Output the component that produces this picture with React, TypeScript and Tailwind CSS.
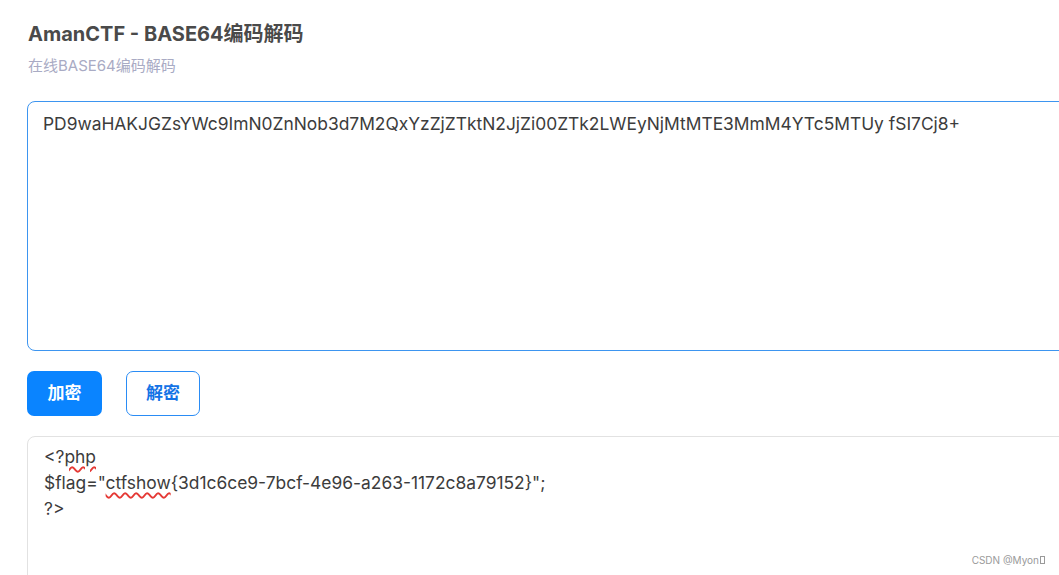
const input =
  "PD9waHAKJGZsYWc9ImN0ZnNob3d7M2QxYzZjZTktN2JjZi00ZTk2LWEyNjMtMTE3MmM4YTc5MTUy fSI7Cj8+";

function Squiggle({ children }: { children: React.ReactNode }) {
  return (
    <span className="underline decoration-wavy decoration-[#e53935] decoration-[1.5px] underline-offset-[3px]">
      {children}
    </span>
  );
}

export default function App() {
  return (
    <div className="relative h-[575px] w-[1059px] overflow-hidden bg-white font-['Inter','Noto_Sans_CJK_SC',sans-serif]">
      <div className="pl-[27px] pt-[20px]">
        <h1 className="pl-[1px] text-[20px] leading-[28px] font-bold text-[#4a4a4a]">
          AmanCTF - BASE64编码解码
        </h1>
        <p className="mt-[8px] pl-[1px] text-[15px] leading-[20px] text-[#a9abc4]">
          在线BASE64编码解码
        </p>

        {/* input */}
        <div className="mt-[25px] h-[250px] w-[1100px] rounded-[8px] border border-[#3d95f0] px-[15px] pt-[9px] text-[17.4px] leading-[26px] text-[#3c3c3c]">
          {input}
        </div>

        {/* buttons */}
        <div className="mt-[20px] flex gap-[24px]">
          <button className="h-[45px] w-[75px] rounded-[7px] bg-[#0a84ff] text-[17px] font-bold text-white">
            加密
          </button>
          <button className="h-[45px] w-[74px] rounded-[7px] border border-[#2a8cf5] bg-white text-[17px] font-bold text-[#1473e6]">
            解密
          </button>
        </div>

        {/* output */}
        <div className="mt-[20px] h-[200px] w-[1100px] rounded-[8px] border border-[#e2e2e2] px-[16px] pt-[7px] text-[17.4px] leading-[26px] text-[#3c3c3c]">
          <div>
            &lt;?<Squiggle>php</Squiggle>
          </div>
          <div>
            $flag="<Squiggle>ctfshow</Squiggle>
            {"{3d1c6ce9-7bcf-4e96-a263-1172c8a79152}"}";
          </div>
          <div>?&gt;</div>
        </div>
      </div>

      <div className="absolute right-[14px] bottom-[9px] flex items-center text-[10px] leading-[12px] text-[#9a9a9a]">
        CSDN @Myon
        <span className="ml-[1px] inline-block h-[8px] w-[5px] border border-[#9a9a9a]" />
      </div>
    </div>
  );
}
